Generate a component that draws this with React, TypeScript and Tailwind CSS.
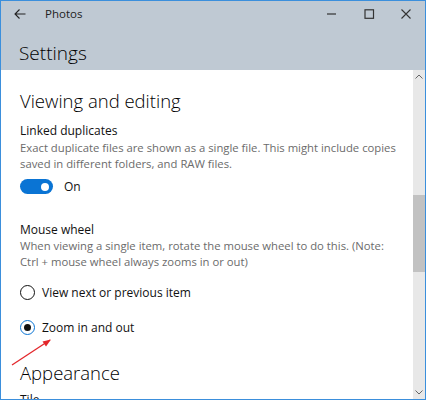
import React from 'react';

const font = { fontFamily: '"Open Sans", "Noto Sans", sans-serif' };

function TitleBar() {
  return (
    <div className="h-[69px] bg-[#bfc9d3] flex flex-col shrink-0">
      <div className="h-[25px] flex items-center">
        <svg className="ml-[13px]" width="12" height="10" viewBox="0 0 12 10" fill="none" stroke="#222" strokeWidth="1.1">
          <path d="M11.5 5H1M5.5 0.5L1 5l4.5 4.5" />
        </svg>
        <span className="ml-[19px] text-[11.5px] text-[#222]">Photos</span>
        <div className="flex-1" />
        {/* window controls */}
        <svg width="11" height="10" viewBox="0 0 11 10" fill="none" stroke="#333" strokeWidth="1.2">
          <path d="M1 5h9" />
        </svg>
        <svg className="ml-[27px]" width="11" height="10" viewBox="0 0 11 10" fill="none" stroke="#333" strokeWidth="1.2">
          <rect x="1" y="0.8" width="8.5" height="8.5" />
        </svg>
        <svg className="ml-[26px] mr-[14px]" width="10" height="10" viewBox="0 0 10 10" fill="none" stroke="#333" strokeWidth="1.1">
          <path d="M0.5 0.5l9 9M9.5 0.5l-9 9" />
        </svg>
      </div>
      <div className="pl-[18px] mt-[14px] text-[19px] leading-[26px] font-light text-black">Settings</div>
    </div>
  );
}

function Radio({ checked, label }: { checked?: boolean; label: string }) {
  return (
    <div className="flex items-center h-[15px]">
      <div
        className={`w-[15px] h-[15px] rounded-full border-[1.5px] flex items-center justify-center ${
          checked ? 'border-[#0a74d4]' : 'border-[#111]'
        }`}
      >
        {checked && <div className="w-[7px] h-[7px] rounded-full bg-[#111]" />}
      </div>
      <span className="ml-[7px] text-[12px] leading-[16px] text-[#111]">{label}</span>
    </div>
  );
}

function Scrollbar() {
  return (
    <div className="w-[12px] bg-[#e8e8e8] flex flex-col items-center shrink-0">
      <svg className="mt-[4px]" width="8" height="5" viewBox="0 0 8 5" fill="none" stroke="#666" strokeWidth="1">
        <path d="M0.5 4.5L4 1l3.5 3.5" />
      </svg>
      <div className="mt-[116px] w-full h-[77px] bg-[#c2c2c2]" />
      <div className="flex-1" />
      <svg className="mb-[4px]" width="8" height="5" viewBox="0 0 8 5" fill="none" stroke="#666" strokeWidth="1">
        <path d="M0.5 0.5L4 4l3.5-3.5" />
      </svg>
    </div>
  );
}

export default function App() {
  return (
    <div className="w-[426px] h-[400px] overflow-hidden bg-white" style={font}>
      <div className="relative w-full h-full border border-[#3b8fdc] flex flex-col">
        <TitleBar />
        <div className="flex flex-1 min-h-0">
          <div className="flex-1 pl-[19px] pr-[10px] overflow-hidden">
            <div className="mt-[19px] text-[18.5px] leading-[24px] font-light text-black">Viewing and editing</div>

            <div className="mt-[10px] text-[12px] leading-[16px] text-[#111]">Linked duplicates</div>
            <div className="mt-[1px] text-[11.3px] leading-[16px] text-[#6b6b6b]">
              Exact duplicate files are shown as a single file. This might include copies saved in different folders,
              and RAW files.
            </div>

            <div className="mt-[7px] flex items-center h-[15px]">
              <div className="w-[33px] h-[15px] rounded-full bg-[#0a74d4] flex items-center justify-end pr-[4px]">
                <div className="w-[8px] h-[8px] rounded-full bg-white" />
              </div>
              <span className="ml-[11px] text-[12px] leading-[16px] text-[#111]">On</span>
            </div>

            <div className="mt-[28px] text-[12px] leading-[16px] text-[#111]">Mouse wheel</div>
            <div className="text-[11.3px] leading-[16px] text-[#6b6b6b]">
              When viewing a single item, rotate the mouse wheel to do this. (Note: Ctrl + mouse wheel always zooms in
              or out)
            </div>

            <div className="mt-[15px]">
              <Radio label="View next or previous item" />
            </div>
            <div className="mt-[20px]">
              <Radio checked label="Zoom in and out" />
            </div>

            <div className="mt-[26px] text-[18.5px] leading-[24px] font-light text-black">Appearance</div>
            <div className="mt-[7px] text-[12px] leading-[16px] text-[#111]">Tile</div>
          </div>
          <Scrollbar />
        </div>

        {/* red annotation arrow */}
        <svg className="absolute left-0 top-0 pointer-events-none" width="426" height="400" viewBox="0 0 426 400">
          <path d="M11 364L49 339" stroke="#e3262b" strokeWidth="1.3" fill="none" />
          <path d="M50 338.5L41.5 340.5L45 345.5Z" fill="#e3262b" />
        </svg>
      </div>
    </div>
  );
}
